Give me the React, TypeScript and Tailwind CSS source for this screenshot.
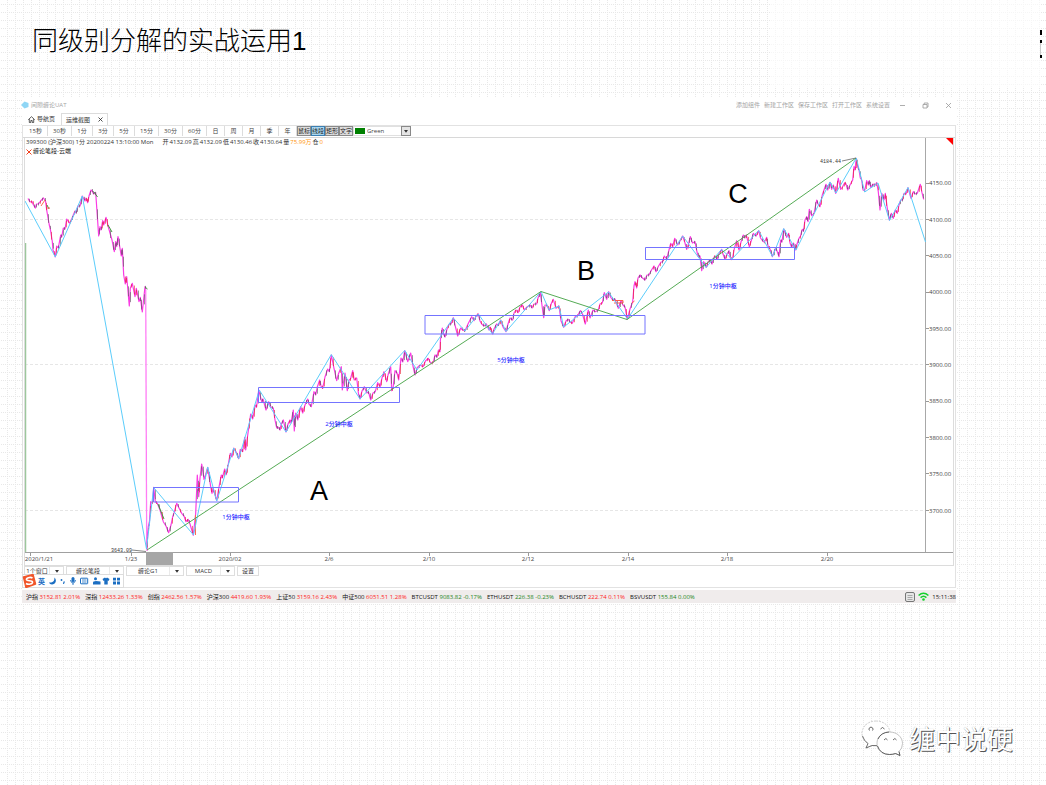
import React from 'react';

type Point = [number, number];

const PRE_HOLIDAY =
  '28,198.5 30,202 32,201.5 33,204 35.3,208 36.5,204 38.5,204 41,200.5 43.5,198 45.5,201 47,212 49.3,225 50.5,230 52.3,241.5 53,250 55.3,257 56.7,246 58.3,248 60.7,235 61.7,237 63.3,228 65,229 66.7,219 69.3,223 71,221 73.3,215 75,211 76,213 78,206 80,206 82.3,196 85,201 86,198 87.7,202.7 89,196 91,190 92,191 93.7,194 95.7,192.7 98.7,236 100,226.7 101,230 102.7,220.7 103.7,225 106,217.3 108.7,228.3 112,240 114.3,251.7 115.7,241.7 116.7,246.7 118,236.7 120,248.3 121.3,256 122.3,248.3 123.7,275 125.3,284 126.7,276.7 129.3,306 130.3,288.3 132.3,283.3 135,296.7 136.3,288.3 139,301.7 140.3,297.3 142.3,312 145,286.7 145.7,288';

const RALLY =
  '147,550.7 147.6,534 148.3,526.7 149.5,521 150.7,501.7 152.5,503 153.7,487.3 155.3,501.7 157.3,503.3 160,510 163.3,521.7 166,526 168.7,532.7 171,525 172.7,516.7 174,513 176.7,503.3 179,508 181.7,513.3 184,516 186,521.7 188,519.3 190,524 193.3,535.3 195.7,513.3 197.3,475 198.7,496.7 200,478 201.7,464 204,479.3 205.5,475 207.7,467.3 210.7,486.7 212,493.3 213,488 216.7,500.7 219,487 221.3,475 222.3,478 224.7,469 226.3,474.7 228.5,463 230.3,453.3 232,457 233.7,448 236,451.7 238.7,458.7 240.3,449.3 242.7,451.7 244.7,437.3 245.7,450 248,433 250.7,414 252.7,419 255.3,405 256.6,407 258.7,390 261.7,401.7 263,399 266,410 268.7,401.7 271,407 273.3,408 275,420 276.7,428 278,427 280,430 281.3,424 283.3,420 286,432 288,424 290,420 291,423 293.3,410 294.3,431 295.7,413 297.7,420 300.7,406.7 302.7,413 305,405 307.7,399 309,404 311.3,406.7 314,391.7 315.7,395 317.3,387 319.7,380 321,386 322.7,388.3 325,377 327.7,369 329.3,371.7 331.3,355 334,368.3 336.7,380.7 338.4,374 341.3,366.7 342.3,390 345,373 347.3,390.7 349,380 350.5,379 352.7,370.7 354.2,380 356.7,378 358.5,394 360,399 362,391 364.3,386.7 366.8,393 368.5,392 370.7,400 373,393 375.3,391.7 377.7,382.7 380,387 382,378 384,371.7 386.7,381.7 388,375 390.7,366.7 391.7,390.7 393,388 395,370.7 397,373 398.7,380 401,358 402.8,362 404.7,350.7 407.7,361.7 410.7,353 413,366 415,375 417,368 420,365 423,366.7 425.5,361 428.3,358.3 430.5,363 433.3,362.3 435,355 437,357 438.5,350 440,351.7 440.4,340 442.3,328 443.5,334 445,337 447,329 449.3,324 451,324 453.3,317.7 455.5,327 457.7,336 460.7,328 462.7,330 465,331 468,324 471.7,316.7 474,320.7 476,316 478.3,314 480,321 481.7,324 484,326 486.3,324 489,330 490,327 492.7,334 494,329 496.7,324 498.5,325 500.7,320 503,327 506,331.7 508,324 510,318 512.7,320 514,313 516,310 518,312.7 520,307 522.3,305 524.3,310 527,307 530,305 532,308 534,304 536.7,304 538,298 540.3,292.3 541.8,304 543.7,317.7 545,305 547,305 549.3,310.7 551.5,303 553.3,299.3 556,308.3 559,306 561,320.7 563.7,327.3 566,321 568.3,319.3 570,322 572.3,323.3 575,317 578,315 580.3,310.7 582.5,314 585.3,324 588.3,310 590,318 593,310 595.3,311.7 598.3,310 600,304 602.3,303 604.3,292.7 606.7,299.3 608.7,291.7 610.5,297 612.7,300 615,299 618.3,308.3 621,300.7 623,305 625,307 627.3,319.3 630,309 632.7,301.7 634,286 635,281.7 636.7,288 638,278 640,275 642.5,278 645,280 647,275 649,275 651.5,270 654,266 656,271.7 658,267 661,262 662.5,262 664.3,256 666.7,259 669,250 670.7,243.3 672.7,246.7 674.7,238.3 677.7,245 680,241 682.7,236 685,243 686.7,249.3 688.5,244 690.3,236.7 692.5,243 695,241.7 697,252 698.3,256.7 700,256 701.7,270.7 703.7,261.7 706.3,267.3 708,262 710,260 712,264 713.5,258 715,256 717,259 718.3,255 721.7,249.3 723,254 725,259.3 727,254 729,250.7 730.3,258 732.3,259.3 734.5,248 736.7,240.7 739,250 741,242 743.3,235 744.8,238 746.3,235 749.3,246.7 751.5,240 753.3,233.3 756,236 758.7,230.7 760.5,238 763.3,241.7 764.5,242 766.7,237.3 768,246 770,249 772.3,256.7 775.7,247.7 777,251 779,256.7 780.7,240 782,242 783.7,229 786.7,237.3 788.7,233.3 790,243 791.7,247.3 793.5,243 795.7,250 797,244 799,238.3 800.5,236 802.3,229.3 803.5,231 805,220 806.7,216.7 808,221.7 809.3,209.3 811.7,215.7 814,213.3 816.7,200 818,204 820,206.7 822.3,195 824,190 826,184.3 827.7,190 830,182.3 831.7,189.3 833.3,185 835.7,193.3 838.3,178.3 840.7,189.3 842.5,187 844.7,182.7 846,184 847.7,190 850,185 852.7,180 854,166.7 855,170 856.3,158.3 857.7,167 859,170 860.3,178 861.7,180 863,190 864.7,190.7 866.7,180.7 868.3,185 869.3,180.7 870.7,187.3 873,184 874.5,186 876.7,182.7 878.3,191.7 880,210 881.7,193.3 884,200 885.3,193.3 887.3,208.3 889.3,220 891.3,213.3 893.3,218.3 895.3,210 897.3,213.3 899,205 900.7,200 902.5,200 904,193.3 906,194 908,187.7 911,198.3 913.3,191.7 915,194 917.3,193.3 920.3,184.3 922,192.7 923.7,199.3';

const PENS =
  '25,201 55.3,257 82.3,196 146.5,549 153.7,487.5 193.5,535 207.7,467 216.7,501 233.7,448 238.7,458.5 259.3,390 286,432 331.3,354.5 360,399 404.7,350.5 417,370 453.3,318 465,331 478.3,314 492.5,334 500.7,320 506,331.5 541,291.5 549,310 559,306 563.7,327 608.5,292 627.5,319 682.7,236 706,267.5 721.5,249.5 732,259 758.7,230.5 772.5,256.5 783.7,228.5 796,250 830,182 836,193 856.3,158 864.7,192 878,183 889.5,220.5 908,187.5 925.5,242';

const parse = (s: string): Point[] =>
  s.split(' ').map((p) => p.split(',').map(Number) as Point);

function candlePath(series: string, rising: boolean): string {
  const pts = parse(series);
  let d = '';
  for (let i = 1; i < pts.length; i++) {
    const [x0, y0] = pts[i - 1];
    const [x1, y1] = pts[i];
    const up = (i * 7) % 5 < 2 ? y1 > y0 : y1 < y0;
    if (up !== rising) continue;
    const mx = Math.round((x0 + x1) / 2) + 0.5;
    const mid = (y0 + y1) / 2;
    const half = Math.min(5, Math.max(1.5, Math.abs(y1 - y0) / 3));
    d += `M${mx} ${mid - half}V${mid + half}`;
  }
  return d;
}

const PRICES = ['4150.00', '4100.00', '4050.00', '4000.00', '3950.00', '3900.00', '3850.00', '3800.00', '3750.00', '3700.00'];
const DATES: { x: number; tick: number; label: string }[] = [
  { x: 39, tick: 30, label: '2020/1/21' },
  { x: 131, tick: 131, label: '1/23' },
  { x: 230, tick: 230, label: '2020/02' },
  { x: 329, tick: 329, label: '2/6' },
  { x: 429, tick: 429, label: '2/10' },
  { x: 528, tick: 528, label: '2/12' },
  { x: 628, tick: 628, label: '2/14' },
  { x: 727, tick: 727, label: '2/18' },
  { x: 827, tick: 827, label: '2/20' },
];
const HUBS = [
  { x: 153.5, y: 487.5, w: 85, h: 14.5, lx: 236, ly: 519, label: '1分钟中枢' },
  { x: 258.5, y: 387.5, w: 141, h: 15, lx: 339, ly: 426, label: '2分钟中枢' },
  { x: 425, y: 315.5, w: 220, h: 18.5, lx: 511, ly: 362, label: '5分钟中枢' },
  { x: 645.5, y: 247.5, w: 149, h: 12, lx: 723, ly: 288, label: '1分钟中枢' },
];

function Chart() {
  return (
    <svg viewBox="25 138 928 427" className="block h-auto w-full text-[6px]" role="img" aria-label="399300 沪深300 1分">
      <g stroke="#e6e6e6" strokeDasharray="3 2">
        <path d="M25 219.5H925M25 364.5H925M25 510.5H925" />
      </g>
      <path d="M25.5 243V552" stroke="#9cc79c" strokeWidth="1.5" />
      <path d="M925.5 138V552" stroke="#a8a8a8" strokeWidth="1" />
      <path d="M25 552.5H953" stroke="#a0a0a0" />
      <path d="M946 138H953V145Z" fill="#f00" />
      {PRICES.map((p, i) => {
        const y = 183 + i * 36.37;
        return (
          <g key={p}>
            <path d={`M926 ${Math.floor(y) + 0.5}H929`} stroke="#999" />
            <text x="929" y={y + 2.2} fill="#444">{p}</text>
          </g>
        );
      })}
      <rect x="146" y="552" width="27" height="13" fill="#a6a6a6" />
      {DATES.map((d) => (
        <g key={d.label}>
          <path d={`M${d.tick + 0.5} 553V556`} stroke="#999" />
          <text x={d.x} y="561" textAnchor="middle" fill="#444">{d.label}</text>
        </g>
      ))}

      <g fill="none" strokeLinejoin="round">
        <path d="M145.700 288L146.700 549" stroke="#ff7df5" strokeWidth="1.3" />
        <polyline points={PRE_HOLIDAY} stroke="#fa3ce4" strokeWidth="1.2" />
        <polyline points={RALLY} stroke="#fa3ce4" strokeWidth="1.2" />
        <g opacity="0.55">
          <path d={candlePath(PRE_HOLIDAY, true) + candlePath(RALLY, true)} stroke="#e8141e" />
          <path d={candlePath(PRE_HOLIDAY, false) + candlePath(RALLY, false)} stroke="#4a4a4a" />
        </g>
        <path d="M612 300.500H623V303H614M632 303L634.500 301" stroke="#ff5a4d" />
        <path d="M94 192L97.500 197M47 205L49 209M108 225L112 232M158 504L164 519M145 287L147.500 289" stroke="#3f9a3f" />
        <path d="M41 206L45 200M47 208H50M195.500 535V515" stroke="#ff6a50" />
        <polyline points={PENS} stroke="#5ccdfb" strokeWidth="1" />
        <polyline points="147,550 541,291.5 627,319.5 856,158" stroke="#55ab55" strokeWidth="1" />
        {HUBS.map((h) => (
          <rect key={h.x} x={h.x} y={h.y} width={h.w} height={h.h} stroke="#7474ff" />
        ))}
        <path d="M132 550L146 551.500M842 161L856 158" stroke="#666" strokeWidth="0.8" />
      </g>

      {HUBS.map((h) => (
        <text key={h.lx} x={h.lx} y={h.ly} textAnchor="middle" fill="#1414ff" fontWeight="500">{h.label}</text>
      ))}
      <g className="font-['Liberation_Mono',monospace] text-[5px]" fill="#333">
        <text x="111" y="552">3643.09</text>
        <text x="820" y="163">4184.44</text>
      </g>
      <g className="font-['Liberation_Sans',sans-serif] text-[27px]" textAnchor="middle" fill="#000">
        <text x="319" y="500">A</text>
        <text x="586" y="280">B</text>
        <text x="738" y="203">C</text>
      </g>
    </svg>
  );
}

const PERIODS = [
  ['15秒', 'w-6'], ['30秒', 'w-6'], ['1分', 'w-[21px]'], ['3分', 'w-[21px]'], ['5分', 'w-[21px]'],
  ['15分', 'w-6'], ['30分', 'w-6'], ['60分', 'w-6'], ['日', 'w-[18px]'], ['周', 'w-[18px]'],
  ['月', 'w-[18px]'], ['季', 'w-[18px]'], ['年', 'w-[18px]'],
];

function Toolbar() {
  return (
    <div className="flex h-3 items-start border-b border-[#d8d8d8] pl-px">
      {PERIODS.map(([label, width]) => (
        <button key={label} className={`${width} h-[10px] shrink-0 border-r border-[#dcdcdc] text-center leading-[10px] text-[#444]`}>
          {label}
        </button>
      ))}
      {['鼠标', '线段', '矩形', '文字'].map((label) => (
        <button
          key={label}
          className={`h-[10px] w-[14px] shrink-0 border text-center leading-[8px] text-[#222] ${
            label === '线段' ? 'border-[#3c7fb1] bg-[#a9d8f2]' : 'border-[#8a8a8a] bg-[#dcdcdc]'
          }`}
        >
          <span className="-mx-1">{label}</span>
        </button>
      ))}
      <div className="flex h-[10px] w-[58px] shrink-0 items-center border border-[#e0e0e0] pl-px">
        <span className="h-[6px] w-[10px] shrink-0 bg-[#008000]" />
        <div className="relative flex h-full grow">
          <select aria-label="画线颜色" className="w-full appearance-none bg-transparent pl-[2px] text-[6px] leading-[8px] text-[#444]">
            <option>Green</option>
          </select>
          <span className="pointer-events-none absolute -top-px -right-px flex h-[10px] w-[10px] items-center justify-center border border-[#888] bg-[#e4e4e4]">
            <Caret />
          </span>
        </div>
      </div>
    </div>
  );
}

function Caret() {
  return (
    <svg viewBox="0 0 4 3" className="h-[3px] w-[4px]" aria-hidden="true">
      <path d="M0 0H4L2 2.800Z" fill="#333" />
    </svg>
  );
}

function Picker({ label, width, name }: { label: string; width: string; name: string }) {
  return (
    <div className={`${width} flex h-[10px] shrink-0 items-center border border-[#dedede] bg-white`}>
      <select aria-label={name} className="h-2 min-w-0 grow appearance-none text-center text-[6px] leading-[8px] text-[#333]">
        <option>{label}</option>
      </select>
      <span className="pointer-events-none flex w-[14px] justify-center self-stretch border-l border-[#eaeaea] py-[3px]">
        <Caret />
      </span>
    </div>
  );
}

function ImeBar() {
  return (
    <div className="absolute top-[8px] left-[-2px] flex h-[14px] w-[102px] items-center border border-[#dcdcdc] bg-white">
      <svg viewBox="0 0 102 14" className="-ml-px h-[14px] w-[102px] shrink-0" aria-hidden="true">
        <path d="M1.500 3L11 .5 13.500 10 4 13.500Z" fill="#f1562b" stroke="#f1562b" strokeWidth="1.500" strokeLinejoin="round" />
        <path d="M10.500 4C8 2.500 4 4 4.500 5.800 5 7.500 10 6 10.500 8 11 10 6.500 11 4 9.500" fill="none" stroke="#fff" strokeWidth="1.600" />
        <text x="16" y="9.500" fontSize="7" fontWeight="700" fill="#1b6ec2">英</text>
        <g fill="#1b6ec2">
          <path d="M32.300 3.500C35.500 6 33.500 10.500 30 10.500 28.500 10.500 27.500 9.700 27 8.500 30.500 9 33 7 32.300 3.500Z" />
          <circle cx="39.500" cy="6" r=".9" />
          <path d="M41.500 7.500H43L42 10H41Z" />
          <rect x="49.500" y="3" width="3" height="5" rx="1.500" />
          <path d="M48.500 6Q49 9 51 9T53.500 6M51 9V11" fill="none" stroke="#1b6ec2" strokeWidth=".9" />
          <rect x="58.500" y="4.200" width="7.200" height="5.600" rx=".5" fill="none" stroke="#1b6ec2" />
          <path d="M60 6H64.500M60 8H64.500" stroke="#1b6ec2" strokeWidth=".8" />
          <circle cx="73.500" cy="4.800" r="1.500" />
          <path d="M71 10V8.500Q71 7 74 7L78.500 7.500V10.500H71Z" />
          <path d="M80.500 5L83 3.500Q84 5 85 3.500L87.500 5 86.500 7 85.700 6.500V10.500H82.300V6.500L81.500 7Z" />
          <path d="M91 3.800H94V6.600H91ZM95 3.800H98V6.600H95ZM91 7.600H94V10.400H91ZM95 7.600H98V10.400H95Z" />
        </g>
      </svg>
    </div>
  );
}

const QUOTES: [string, string, boolean][] = [
  ['沪指', '3152.81 2.01%', true],
  ['深指', '12433.26 1.33%', true],
  ['创指', '2462.56 1.57%', true],
  ['沪深300', '4419.60 1.93%', true],
  ['上证50', '3159.16 2.43%', true],
  ['中证500', '6051.51 1.28%', true],
  ['BTCUSDT', '9083.82 -0.17%', false],
  ['ETHUSDT', '226.38 -0.23%', false],
  ['BCHUSDT', '222.74 0.11%', true],
  ['BSVUSDT', '155.84 0.00%', false],
];

function StatusBar() {
  return (
    <footer className="mt-[2px] flex h-[13px] items-center bg-[#f0ecec] pl-[4px]">
      <ul className="flex gap-[5px] whitespace-nowrap">
        {QUOTES.map(([name, value, up]) => (
          <li key={name} className="text-[#111]">
            {name} <span className={up ? 'text-[#f22]' : 'text-[#1d861d]'}>{value}</span>
          </li>
        ))}
      </ul>
      <div className="ml-auto flex items-center gap-[3px]">
        <svg viewBox="0 0 10 10" className="size-[10px]" aria-hidden="true">
          <rect x=".5" y=".5" width="9" height="9" rx="1.500" fill="#e6e6e6" stroke="#777" />
          <path d="M2.500 3.500H7.500M2.500 5.500H7.500M2.500 7.500H7.500" stroke="#999" strokeWidth=".8" />
        </svg>
        <svg viewBox="0 0 11 9" className="h-[9px] w-[11px]" fill="none" stroke="#14cf2c" strokeWidth="1.500" aria-hidden="true">
          <path d="M.6 3.500Q5.500 -1 10.400 3.500M2.600 5.600Q5.500 2.800 8.400 5.600" />
          <circle cx="5.500" cy="7.500" r=".6" fill="#14cf2c" />
        </svg>
        <time className="font-medium text-[#222]">15:11:38</time>
      </div>
    </footer>
  );
}

function TradingWindow() {
  return (
    <main className="mr-[90px] ml-[22px] bg-white font-['Open_Sans','Noto_Sans_CJK_SC',sans-serif] text-[6px] leading-[8px]">
      <header className="flex h-4 items-center pr-[4px] text-[#a4a4a4]">
        <svg viewBox="0 0 8 8" className="-ml-px size-2" aria-hidden="true">
          <path d="M3.500 0.500L7.500 2V6L3.500 7.500 0 4Z" fill="#8fd6f5" />
        </svg>
        <span className="ml-[2px]">间隙缠论UAT</span>
        <nav className="ml-auto flex gap-[4px]">
          {['添加组件', '新建工作区', '保存工作区', '打开工作区', '系统设置'].map((item) => (
            <button key={item}>{item}</button>
          ))}
        </nav>
        <div className="ml-[9px] flex gap-[16px]">
          <button aria-label="最小化">
            <svg viewBox="0 0 7 7" className="size-[7px]" stroke="#999" strokeWidth=".8"><path d="M1 3.500H6" /></svg>
          </button>
          <button aria-label="还原">
            <svg viewBox="0 0 7 7" className="size-[7px]" stroke="#999" strokeWidth=".8" fill="none"><path d="M1 2.500H5V6H1ZM2.200 2.500V1H6V5H5" /></svg>
          </button>
          <button aria-label="关闭">
            <svg viewBox="0 0 7 7" className="size-[7px]" stroke="#999" strokeWidth=".8"><path d="M1 1L6 6M6 1L1 6" /></svg>
          </button>
        </div>
      </header>
      <nav className="flex h-3 items-end pl-[6px] text-[#333]">
        <button className="flex h-3 w-[33px] items-center gap-[2px]">
          <svg viewBox="0 0 7 7" className="size-[7px]" fill="none" stroke="#333" strokeWidth=".8" aria-hidden="true">
            <path d="M.3 3.700L3.500 .7 6.700 3.700M1.300 3V6.500H2.800V4.500H4.200V6.500H5.700V3" />
          </svg>
          导航页
        </button>
        <button className="flex h-3 w-[47px] items-center justify-between border border-b-0 border-[#dcdcdc] px-[4px]">
          运维截图
          <svg viewBox="0 0 5 5" className="size-[5px]" stroke="#222" strokeWidth=".8" aria-hidden="true"><path d="M.5 .5L4.500 4.500M4.500 .5L.5 4.500" /></svg>
        </button>
      </nav>
      <section className="border border-[#e2e2e2]">
        <Toolbar />
        <div className="mx-px border border-t-0 border-[#dcdcdc]">
          <div className="relative">
            <Chart />
            <div className="absolute top-0 left-px whitespace-nowrap leading-[9px] text-[#333]">
              <div className="flex gap-px">
                <span className="mr-[8px]">399300 (沪深300) 1分 20200224 13:10:00 Mon</span>
                {[['开', '4132.09'], ['高', '4132.09'], ['低', '4130.46'], ['收', '4130.64']].map(([k, v]) => (
                  <React.Fragment key={k}>
                    <span>{k}</span>
                    <span>{v}</span>
                  </React.Fragment>
                ))}
                <span>量</span>
                <span className="text-[#ff9408]">75.99万</span>
                <span>仓</span>
                <span className="text-[#ff9408]">0</span>
              </div>
              <p className="flex items-center gap-px text-[#111]">
                <svg viewBox="0 0 6 6" className="size-[6px]" stroke="#f0401e" strokeWidth="1" aria-hidden="true"><path d="M.5 .5L5.500 5.500M5.500 .5L.5 5.500" /></svg>
                缠论笔段-云端
              </p>
            </div>
          </div>
        </div>
        <div className="relative ml-px flex h-[21px] items-start gap-[2px]">
          <Picker name="窗口" label="1个窗口" width="w-10" />
          <Picker name="主图指标" label="缠论笔段" width="w-[58px]" />
          <Picker name="副图指标" label="缠论G1" width="w-[58px]" />
          <Picker name="指标" label="MACD" width="w-[49px]" />
          <button className="h-[10px] w-[22px] border border-[#dedede] leading-[8px] text-[#333]">设置</button>
          <ImeBar />
        </div>
      </section>
      <StatusBar />
    </main>
  );
}

function Watermark() {
  return (
    <aside className="mt-auto flex items-center justify-end gap-[6px] pr-[33px] pb-[29px]">
      <svg viewBox="0 0 42 36" className="h-9 w-[42px]" fill="#fff" aria-hidden="true">
        <path d="M15 1C7 1 1 6.500 1 13.500 1 18 3.500 21.500 7 23.500L5 28 11 25.500Q15 27 19 26L29 12C28 5 22 1 15 1Z" stroke="#bbb" strokeWidth=".7" strokeDasharray="2 1" />
        <path d="M1.500 16Q3 21 7 23.500L5 28 11 25.500H16" fill="none" stroke="#555" strokeWidth=".8" />
        <path d="M28.500 12C21 12 16 17 16 23.200 16 30 21.500 34.500 28.500 34.500Q32 34.500 34.500 33.500L39 35.500 38 31.500Q41.500 28.500 41.500 23.500C41.500 17 36 12 28.500 12Z" stroke="#aaa" strokeWidth=".7" />
        <path d="M16.500 26Q19.500 34.500 28.500 34.500 32 34.500 34.500 33.500L39 35.500 38 31.500M17 19Q20 12.500 28 12" fill="none" stroke="#444" strokeWidth=".8" />
        <g fill="none" stroke="#444" strokeWidth=".8">
          <path d="M8.500 10.500A2 2 0 1 1 11.500 10.500M19.500 9Q21.500 6 23.500 9M23 20Q25 17 26.500 20M32 20Q34 17 35.500 20" />
        </g>
      </svg>
      <p className="font-['Noto_Sans_CJK_SC',sans-serif] text-[26px] leading-8 font-normal text-white [text-shadow:1px_1px_0_#555,0_0_1px_#aaa]">缠中说硬</p>
    </aside>
  );
}

export default function App() {
  return (
    <div className="flex min-h-screen flex-col bg-white bg-[conic-gradient(at_1px_1px,transparent_75%,#e8e8e8_0),conic-gradient(at_1px_1px,transparent_75%,#e8e8e8_0)] bg-[length:2px_8px,8px_2px] bg-[position:7px_4px,7px_4px]">
      <header className="flex h-[97px] items-start">
        <h1 className="mt-[23px] ml-[32px] grow font-['Liberation_Sans','Noto_Sans_CJK_SC',sans-serif] text-[26px] leading-9 font-light text-black">
          同级别分解的实战运用1
        </h1>
        <div className="h-[87px] w-[270px] bg-white/60" />
        <svg viewBox="0 0 6 87" className="h-[87px] w-[6px]" aria-hidden="true">
          <path d="M0 30H2V35H0ZM0 40H2V43H0ZM0 55H2V58H0Z" fill="#000" />
          <path d="M.5 43V55" stroke="#ccc" />
        </svg>
      </header>
      <TradingWindow />
      <Watermark />
    </div>
  );
}
